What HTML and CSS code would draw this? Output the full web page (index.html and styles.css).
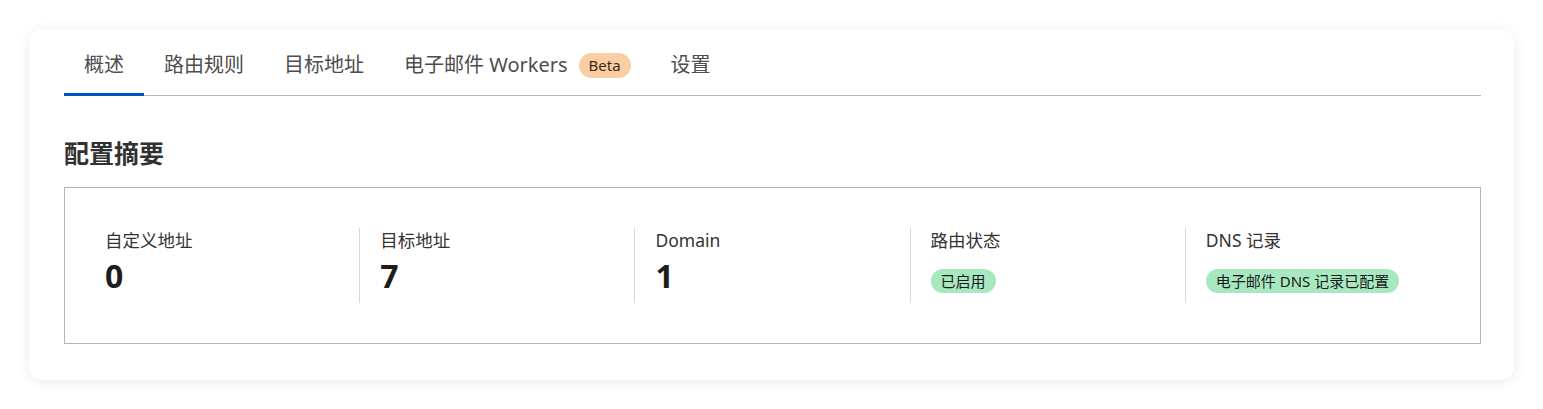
FILE: index.html
```html
<!DOCTYPE html>
<html lang="zh-CN">
<head>
<meta charset="utf-8">
<title>电子邮件路由 - 概述</title>
<link rel="stylesheet" href="styles.css">
</head>
<body>
<div class="card">
  <nav class="tabs">
    <a class="tab active">概述</a>
    <a class="tab">路由规则</a>
    <a class="tab">目标地址</a>
    <a class="tab">电子邮件 Workers <span class="beta">Beta</span></a>
    <a class="tab">设置</a>
  </nav>
  <h2 class="heading">配置摘要</h2>
  <div class="summary">
    <div class="stat">
      <div class="label">自定义地址</div>
      <div class="value">0</div>
    </div>
    <div class="stat">
      <div class="label">目标地址</div>
      <div class="value">7</div>
    </div>
    <div class="stat">
      <div class="label">Domain</div>
      <div class="value">1</div>
    </div>
    <div class="stat">
      <div class="label">路由状态</div>
      <div class="badge-row"><span class="badge">已启用</span></div>
    </div>
    <div class="stat">
      <div class="label">DNS 记录</div>
      <div class="badge-row"><span class="badge">电子邮件 DNS 记录已配置</span></div>
    </div>
  </div>
</div>
</body>
</html>
```

FILE: styles.css
```css
* { box-sizing: border-box; }
html, body { margin: 0; padding: 0; background: #ffffff; }
body {
  padding: 29px;
  font-family: "Noto Sans", "Noto Sans CJK SC", sans-serif;
  color: #333333;
}
.card {
  background: #ffffff;
  border-radius: 14px;
  box-shadow: 0 2px 14px rgba(0, 0, 0, 0.08);
  padding: 22px 33px 35px 35px;
  height: 351px;
}
.tabs {
  display: flex;
  align-items: flex-end;
  border-bottom: 1px solid #b4b4b4;
}
.tab {
  position: relative;
  display: flex;
  align-items: center;
  gap: 11px;
  padding: 0 20px 16px;
  font-size: 20px;
  line-height: 28px;
  color: #4d4d4d;
  cursor: pointer;
}
.tab.active::after {
  content: "";
  position: absolute;
  left: 0;
  right: 0;
  bottom: -1px;
  height: 3px;
  background: #0051c3;
}
.beta {
  display: inline-flex;
  align-items: center;
  height: 25px;
  padding: 0 10px;
  border-radius: 13px;
  background: #fbcda3;
  color: #3d2a1a;
  font-size: 15px;
  line-height: 25px;
}
.heading {
  margin: 41px 0 18px;
  font-size: 25px;
  line-height: 32px;
  font-weight: 700;
  color: #313131;
}
.summary {
  display: flex;
  border: 1px solid #b4b4b4;
  padding: 40px 20px;
}
.stat {
  flex: 1 1 0;
  padding: 0 20px 7px;
}
.stat + .stat {
  border-left: 1px solid #d9d9d9;
}
.label {
  font-size: 17.5px;
  line-height: 24px;
  color: #333333;
}
.value {
  margin-top: 4px;
  font-size: 32px;
  line-height: 40px;
  font-weight: 700;
  color: #1d1d1d;
}
.badge-row {
  margin-top: 17px;
  display: flex;
}
.badge {
  display: inline-flex;
  align-items: center;
  height: 24px;
  padding: 0 10px;
  border-radius: 12px;
  background: #a7e8c0;
  color: #1a1a1a;
  font-size: 15px;
  line-height: 24px;
}
```
